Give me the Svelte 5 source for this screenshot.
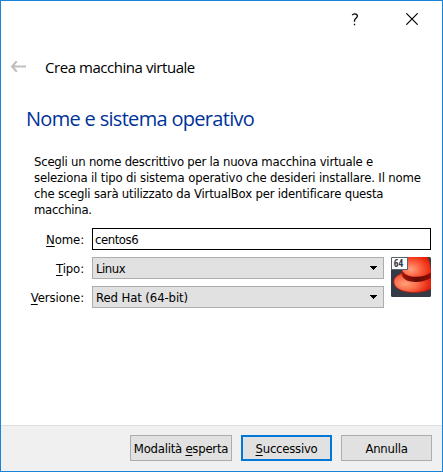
<script>
  let name = $state('centos6');
  const fields = [
    { key: 'T', after: 'ipo:', value: 'Linux', kind: 'short' },
    { key: 'V', after: 'ersione:', value: 'Red Hat (64-bit)', kind: 'long' }
  ];
</script>

<div class="window">
  <header class="titlebar">
    <button class="tool help" aria-label="Aiuto">
      <svg width="8" height="13" viewBox="0 0 8 13" fill="none" stroke="#000" stroke-width="1.3"><path d="M1.2 2.1C1.8 1.2 2.6.8 3.8.8C5.4.8 6.4 1.7 6.4 3.1C6.4 5.1 3.5 5.5 3.5 7.6V8.7M3.5 10.7V12.3" /></svg>
    </button>
    <button class="tool close" aria-label="Chiudi">
      <svg width="12" height="12" viewBox="0 0 12 12" fill="none" stroke="#000" stroke-width="1.2"><path d="M.3.3L11.7 11.7M11.7.3L.3 11.7" /></svg>
    </button>
  </header>

  <div class="crumb">
    <svg width="17" height="13" viewBox="0 0 17 13" fill="none" stroke="#bfbfbf" stroke-width="2"><path d="M16 6.5H2M6.8 1.3L2 6.5L6.8 11.7" /></svg>
    <span>Crea macchina virtuale</span>
  </div>

  <main>
    <h1>Nome e sistema operativo</h1>
    <p>
      <span class="l1">Scegli un nome descrittivo per la nuova macchina virtuale e</span>
      <span class="l2">seleziona il tipo di sistema operativo che desideri installare. Il nome</span>
      <span class="l3">che scegli sarà utilizzato da VirtualBox per identificare questa</span>
      <span class="l4">macchina.</span>
    </p>

    <div class="form">
      <label for="name"><u>N</u>ome:</label>
      <input id="name" bind:value={name} spellcheck="false" />
      <div class="row">
        <div class="pickers">
          {#each fields as f}
            <span class="label"><u>{f.key}</u>{f.after}</span>
            <div class="select">
              <span class={f.kind}>{f.value}</span>
              <svg width="7" height="4" viewBox="0 0 7 4" shape-rendering="crispEdges"><path d="M0 0H7V1H6V2H5V3H4V4H3V3H2V2H1V1H0Z" /></svg>
            </div>
          {/each}
        </div>
        <svg class="os" width="40" height="40" viewBox="0 0 40 40">
          <defs>
            <radialGradient id="crown" cx=".3" cy=".6" r=".75">
              <stop offset="0" stop-color="#ffa184" /><stop offset=".4" stop-color="#ff6a48" /><stop offset="1" stop-color="#e81c05" />
            </radialGradient>
            <radialGradient id="brim" cx=".3" cy=".55" r=".65">
              <stop offset="0" stop-color="#ffa07a" /><stop offset=".5" stop-color="#fb6c49" /><stop offset="1" stop-color="#e3230d" />
            </radialGradient>
            <linearGradient id="band"><stop offset="0" stop-color="#a31708" /><stop offset=".5" stop-color="#650b06" /><stop offset="1" stop-color="#8e0d04" /></linearGradient>
            <clipPath id="tile"><rect width="40" height="40" rx="1.5" /></clipPath>
          </defs>
          <g clip-path="url(#tile)">
            <rect width="40" height="40" fill="#343b46" />
            <path d="M11.5 16C6 18 2.6 21 2.8 25C3.2 31.5 12 35.5 23 35.5C30 35.5 35.5 34 41 31.5V17Z" fill="url(#brim)" stroke="#b51b0c" stroke-width=".7" />
            <path d="M11 14.5C12.5 9 14 4 16 0H36.5C38.5 4 39.5 8 40 15.5C35 22 17 23 11 14.5Z" fill="url(#crown)" />
            <path d="M11 13.5C14 18 18.5 19.8 25 19.8C31 19.8 36 18.3 40 15.5V20.8C36 23.5 30 25.2 24 25C18 24.8 14 23.3 12 20.5C10.8 18.5 10.7 16 11 13.5Z" fill="url(#band)" />
            <rect x=".5" y=".5" width="16" height="12" fill="#fff" stroke="#59616a" stroke-width="1" />
            <text x="2.8" y="10" font-family="Open Sans, sans-serif" font-size="10" font-weight="700" fill="#343b46">64</text>
          </g>
        </svg>
      </div>
    </div>
  </main>

  <footer>
    <button class="btn expert"><span>Modalità <u>e</u>sperta</span></button>
    <button class="btn next"><span><u>S</u>uccessivo</span></button>
    <button class="btn cancel"><span>Annulla</span></button>
  </footer>
</div>

<style>
  .window {
    box-sizing: border-box;
    width: 443px;
    height: 472px;
    border: 1px solid #1883d7;
    background: #fff;
    display: flex;
    flex-direction: column;
    overflow: hidden;
    font: 13px/16px "DejaVu Sans Condensed", "DejaVu Sans", sans-serif;
    font-stretch: condensed;
    color: #000;
    white-space: nowrap;
  }
  .titlebar { display: flex; justify-content: flex-end; height: 46px; }
  .tool { border: 0; padding: 0; background: none; display: flex; }
  .tool svg { display: block; }
  .help { padding-top: 12px; margin-right: 47px; }
  .close { padding-top: 12px; margin-right: 24px; }
  .crumb {
    display: flex;
    align-items: center;
    height: 40px;
    padding-left: 9px;
    font: 15px/20px "Open Sans", sans-serif;
    letter-spacing: -0.45px;
  }
  .crumb span { margin-left: 18px; }
  .crumb svg { position: relative; top: -1px; }
  main { flex: 1; }
  h1 {
    margin: 17px 0 0 25px;
    font: 400 20px/30px "Open Sans", sans-serif;
    letter-spacing: -0.69px;
    color: #003399;
  }
  p { margin: 20px 0 0 33px; }
  p span { display: block; }
  .l1 { letter-spacing: -0.23px; }
  .l2 { letter-spacing: -0.16px; }
  .l3 { letter-spacing: -0.2px; }
  .l4 { letter-spacing: -0.3px; }
  .form {
    display: grid;
    grid-template-columns: 83px 339px;
    column-gap: 8px;
    row-gap: 7px;
    margin-top: 10px;
    line-height: 21px;
  }
  label, .label { padding-top: 1px; text-align: right; letter-spacing: -0.1px; }
  u { text-decoration: underline; text-underline-offset: 2px; text-decoration-thickness: 1px; }
  input {
    box-sizing: border-box;
    width: 339px;
    height: 22px;
    border: 1px solid #000;
    padding: 1px 2px 0;
    font: inherit;
    letter-spacing: -0.45px;
    outline: 0;
  }
  .row { grid-column: 1 / 3; display: flex; gap: 7px; }
  .pickers { display: grid; grid-template-columns: 83px 292px; gap: 7px 8px; }
  .select {
    box-sizing: border-box;
    height: 22px;
    border: 1px solid #adadad;
    background: #e1e1e1;
    padding: 0 6px 0 3px;
    display: flex;
    align-items: center;
    justify-content: space-between;
    line-height: 19px;
  }
  .select span { padding-top: 1px; }
  .short { letter-spacing: -0.45px; }
  .long { letter-spacing: -0.1px; }
  footer {
    display: flex;
    gap: 9px;
    justify-content: flex-end;
    height: 36px;
    padding: 9px 10px 0 0;
    border-top: 1px solid #dfdfdf;
    background: #f0f0f0;
  }
  .btn {
    box-sizing: border-box;
    width: 91px;
    height: 26px;
    padding: 1px 0 0;
    border: 1px solid #adadad;
    background: #e1e1e1;
    font: inherit;
    letter-spacing: -0.25px;
    color: #000;
  }
  .expert { width: 102px; }
  .next { border: 2px solid #0078d7; }
</style>
